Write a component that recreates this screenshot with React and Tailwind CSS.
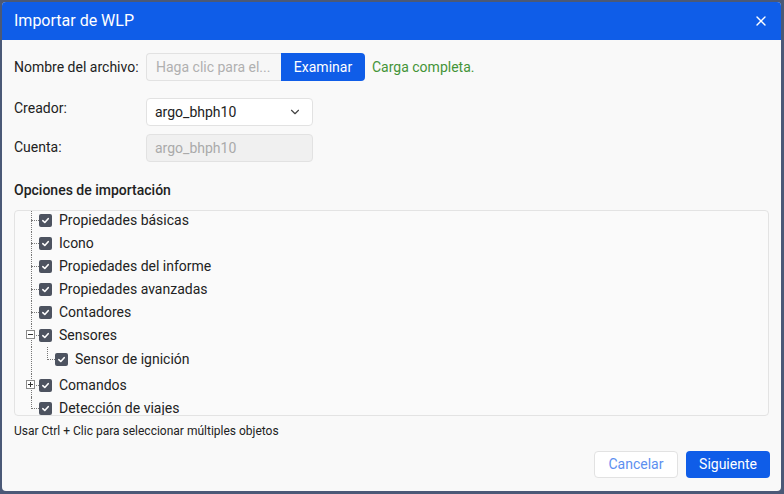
import { ChevronDown, X } from 'lucide-react'

const items = [
  { label: 'Propiedades básicas' },
  { label: 'Icono' },
  { label: 'Propiedades del informe' },
  { label: 'Propiedades avanzadas' },
  { label: 'Contadores' },
  { label: 'Sensores', open: true, children: ['Sensor de ignición'] },
  { label: 'Comandos', closed: true },
  { label: 'Detección de viajes', last: true },
]

function Check() {
  return (
    <span className="w-[13px] h-[13px] rounded-[2px] bg-[#4d5360] flex items-center justify-center flex-shrink-0">
      <svg width="9" height="9" viewBox="0 0 10 10">
        <path d="M2 5.2 L4.2 7.2 L8 3" fill="none" stroke="#fff" strokeWidth="1.8" strokeLinecap="round" strokeLinejoin="round" />
      </svg>
    </span>
  )
}

function Expander({ open }) {
  return (
    <span className="absolute left-[11px] top-[6px] w-[9px] h-[9px] border border-[#8a8a8a] bg-white flex items-center justify-center">
      <span className="absolute w-[5px] h-px bg-[#333]" />
      {!open && <span className="absolute w-px h-[5px] bg-[#333]" />}
    </span>
  )
}

function TreeRow({ item }) {
  return (
    <div>
      <div className="flex items-center h-[23px]">
        {/* connector gutter */}
        <div className="relative w-[24px] h-full flex-shrink-0">
          <span className={`absolute left-[16px] top-0 border-l border-dotted border-[#777] ${item.last ? 'h-[12px]' : 'h-full'}`} />
          <span className="absolute left-[16px] top-[11px] w-[8px] border-t border-dotted border-[#777]" />
          {(item.open || item.closed) && <Expander open={item.open} />}
        </div>
        <Check />
        <span className="ml-[7px] text-[14px] text-[#222]">{item.label}</span>
      </div>
      {item.children && (
        <div className="relative pt-[1px] pb-[3px]">
          <span className="absolute left-[16px] top-0 h-full border-l border-dotted border-[#777]" />
          {item.children.map(c => (
            <div key={c} className="flex items-center h-[23px]">
              <div className="relative w-[40px] h-full flex-shrink-0">
                <span className="absolute left-[32px] -top-[1px] h-[13px] border-l border-dotted border-[#777]" />
                <span className="absolute left-[32px] top-[11px] w-[8px] border-t border-dotted border-[#777]" />
              </div>
              <Check />
              <span className="ml-[7px] text-[14px] text-[#222]">{c}</span>
            </div>
          ))}
        </div>
      )}
    </div>
  )
}

export default function App() {
  return (
    <div className="w-[784px] h-[494px] bg-[#4b5977] pt-[2px] pl-[2px] pr-[3px] pb-[3px] font-['Roboto',sans-serif]">
      <div className="w-full h-full bg-[#f9f9f9] rounded-[4px] overflow-hidden flex flex-col">
        {/* Header */}
        <div className="h-[38px] bg-[#0f5de8] flex items-center justify-between pl-3 pr-[12px] flex-shrink-0">
          <span className="text-white text-[16px]">Importar de WLP</span>
          <X size={16} color="#fff" strokeWidth={2} />
        </div>

        <div className="flex-1 px-3 flex flex-col">
          {/* File row */}
          <div className="flex items-center mt-[13px] h-[28px]">
            <span className="w-[132px] text-[14px] text-[#222]">Nombre del archivo:</span>
            <div className="w-[135px] h-[28px] border border-[#e2e2e2] border-r-0 rounded-l-[4px] bg-[#f7f7f7] px-[9px] flex items-center text-[14px] text-[#b0b0b0]">
              Haga clic para el...
            </div>
            <button className="w-[84px] h-[28px] bg-[#0f5de8] rounded-r-[4px] text-white text-[14px]">Examinar</button>
            <span className="ml-[7px] text-[14px] text-[#449438]">Carga completa.</span>
          </div>

          {/* Creator */}
          <div className="flex items-start mt-[17px]">
            <span className="w-[132px] text-[14px] text-[#222] leading-[16px] pt-[2px]">Creador:</span>
            <div className="w-[167px] h-[28px] border border-[#e2e2e2] rounded-[4px] bg-white pl-[8px] pr-[10px] flex items-center justify-between text-[14px] text-[#222]">
              <span>argo_bhph10</span>
              <ChevronDown size={14} color="#444" strokeWidth={2} />
            </div>
          </div>

          {/* Account */}
          <div className="flex items-center mt-[8px] h-[28px]">
            <span className="w-[132px] text-[14px] text-[#222] -mt-[2px]">Cuenta:</span>
            <div className="w-[167px] h-[28px] border border-[#e2e2e2] rounded-[4px] bg-[#f0f0f0] px-[8px] flex items-center text-[14px] text-[#aaa]">
              argo_bhph10
            </div>
          </div>

          <div className="mt-[20px] text-[14px] font-medium text-[#222] leading-[16px]">Opciones de importación</div>

          {/* Tree */}
          <div className="mt-[12px] h-[206px] border border-[#e3e3e3] rounded-[4px] bg-[#fafafa] overflow-hidden">
            <div className="-mt-[2px]">
              {items.map(it => <TreeRow key={it.label} item={it} />)}
            </div>
          </div>

          <div className="mt-[8px] text-[12px] text-[#222] leading-[14px]">Usar Ctrl + Clic para seleccionar múltiples objetos</div>

          <div className="flex justify-end gap-[8px] mt-[13px] -mr-[1px]">
            <button className="w-[84px] h-[27px] border border-[#e2e2e2] bg-white rounded-[4px] text-[14px] text-[#5c8ff0]">Cancelar</button>
            <button className="w-[84px] h-[27px] bg-[#0f5de8] rounded-[4px] text-[14px] text-white">Siguiente</button>
          </div>
        </div>
      </div>
    </div>
  )
}
